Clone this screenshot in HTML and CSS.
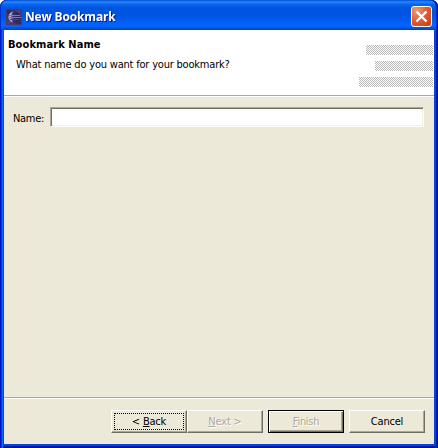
FILE: index.html
```html
<!DOCTYPE html>
<html lang="en">
<head>
<meta charset="utf-8">
<title>New Bookmark</title>
<link rel="stylesheet" href="styles.css">
</head>
<body>
<div class="window">
  <header class="titlebar">
    <svg class="app-icon" width="16" height="16" viewBox="0 0 16 16">
      <defs>
        <linearGradient id="sky" x1="0" y1="0" x2="1" y2="1"><stop offset="0" stop-color="#242052"/><stop offset=".5" stop-color="#49417f"/><stop offset="1" stop-color="#28205c"/></linearGradient>
        <linearGradient id="globe" x1="0" y1="0" x2="1" y2="0"><stop offset="0" stop-color="#9a92d0"/><stop offset=".4" stop-color="#37306f"/><stop offset="1" stop-color="#20194a"/></linearGradient>
      </defs>
      <rect width="16" height="16" fill="url(#sky)"/>
      <rect x=".5" y=".5" width="15" height="15" fill="none" stroke="#4a3a68"/>
      <circle cx="8.5" cy="8" r="5.5" fill="url(#globe)"/>
      <path d="M7 2.500C1 4 1 12 7 13.500C4.500 11 4.500 5 7 2.500Z" fill="#b0a8dc"/>
      <path d="M3 6.500H14M2 8.500H15" stroke="#7f79ba"/>
      <path d="M4 10.500H13" stroke="#4f4788"/>
    </svg>
    <h1 class="title">New Bookmark</h1>
    <button class="close" aria-label="Close">
      <svg width="21" height="21" viewBox="0 0 21 21"><path d="M5.500 5.500L15.500 15.500M15.500 5.500L5.500 15.500" stroke="#fff" stroke-width="2.300"/></svg>
    </button>
  </header>
  <main class="client">
    <section class="banner">
      <div class="heading">
        <h2 class="page-title">Bookmark Name</h2>
        <p class="message">What name do you want for your bookmark?</p>
      </div>
      <svg class="stripes" width="75" height="42" viewBox="0 0 75 42" shape-rendering="crispEdges">
        <defs><pattern id="check" width="2" height="2" patternUnits="userSpaceOnUse"><path d="M0 0h1v1h-1zM1 1h1v1h-1z" fill="#b8b8b8"/></pattern></defs>
        <path d="M7 0h67v10h-67zM16 16h58v10h-58zM0 32h74v10h-74z" fill="url(#check)"/>
      </svg>
    </section>
    <section class="form">
      <label class="label" for="name">Name:</label>
      <input class="field" id="name" type="text">
    </section>
    <footer class="actions">
      <button class="button focused"><span class="text back">&lt; <u>B</u>ack</span></button>
      <button class="button disabled" disabled><span class="text next"><u>N</u>ext &gt;</span></button>
      <button class="button disabled default" disabled><span class="text finish"><u>F</u>inish</span></button>
      <button class="button cancel"><span class="text">Cancel</span></button>
    </footer>
  </main>
</div>
</body>
</html>
```

FILE: styles.css
```css
* { box-sizing: border-box; margin: 0; padding: 0; }
body { background: #fff; overflow: hidden; font: 11px/14px "DejaVu Sans Condensed", "DejaVu Sans", sans-serif; font-stretch: condensed; color: #000; }
.window { width: 438px; height: 448px; display: flex; flex-direction: column; padding: 0 4px 4px; border-radius: 7px 7px 0 0; background: #0842e0;
  box-shadow: inset 1px 0 #0019cf, inset 2px 0 #0831d9, inset 3px 0 #166aee, inset -1px 0 #00138c, inset -2px 0 #001ea0, inset 0 -1px #00138c, inset 0 -2px #001ea0; }
.titlebar { height: 30px; flex: none; margin: 0 -4px; padding: 3px 6px 0; display: flex; align-items: center; border-radius: 7px 7px 0 0;
  background: linear-gradient(#0050d8 0, #2c86fb 2px, #0b67ef 4px, #0055e0 8px, #0054e3 16px, #0060f8 22px, #0065ff 26px, #0054e0 28px, #003dc8 30px);
  box-shadow: inset 1px 0 #0030c8, inset -1px 0 #00138c, inset -2px 0 #0030c0; }
.app-icon { flex: none; }
.title { flex: 1; margin: -1px 0 0 3px; font: bold 13px/18px "Open Sans", sans-serif; font-stretch: normal; letter-spacing: -.15px; color: #fff; text-shadow: 1px 1px #0a1883; white-space: nowrap; transform: scaleX(.92); transform-origin: left; }
.close { width: 21px; height: 21px; border: 1px solid #fff; border-radius: 3px; overflow: hidden; background: radial-gradient(circle at 25% 20%, #f0997b, #e4582f 50%, #c93d12); }
.close svg { display: block; margin: -1px; }
.client { flex: 1; display: flex; flex-direction: column; background: #ece9d8; }
.banner { height: 67px; flex: none; display: flex; justify-content: space-between; background: #fff; border-bottom: 1px solid #fff; box-shadow: inset 0 -1px #aca899; }
.heading { padding: 8px 0 0 4px; }
.page-title { font-size: 11px; line-height: 14px; font-weight: bold; letter-spacing: .08px; }
.message { margin: 6px 0 0 8px; letter-spacing: -.2px; }
.stripes { margin-top: 15px; }
.form { flex: 1; display: flex; align-items: flex-start; padding: 10px 10px 0 9px; }
.label { width: 37px; flex: none; padding-top: 5px; letter-spacing: -.3px; }
.field { flex: 1; min-width: 0; height: 20px; background: #fff; border: 1px solid; border-color: #aca899 #fff #fff #aca899; box-shadow: inset 1px 1px #716f64, inset -1px -1px #f1efe2; outline: 0; }
.actions { height: 47px; flex: none; display: flex; align-items: flex-start; justify-content: flex-end; padding: 12px 9px 0; border-top: 1px solid #aca899; box-shadow: inset 0 1px #fff; }
.button { width: 76px; height: 23px; display: flex; justify-content: center; background: #ece9d8; border: 1px solid; border-color: #fff #716f64 #716f64 #fff; box-shadow: inset -1px -1px #aca899; font: inherit; color: #000; }
.text { padding-top: 4px; white-space: pre; letter-spacing: -.2px; }
.focused { position: relative; }
.focused::after { content: ""; position: absolute; inset: 2px 2px 2px 2px; border: 1px dotted #000; }
.disabled { color: #aca899; text-shadow: 1px 1px #fff; }
.default { margin: 0 5px; border-color: #000; box-shadow: inset 1px 1px #fff, inset -1px -1px #716f64, inset -2px -2px #aca899; }
.default .text { letter-spacing: -.3px; }
```
